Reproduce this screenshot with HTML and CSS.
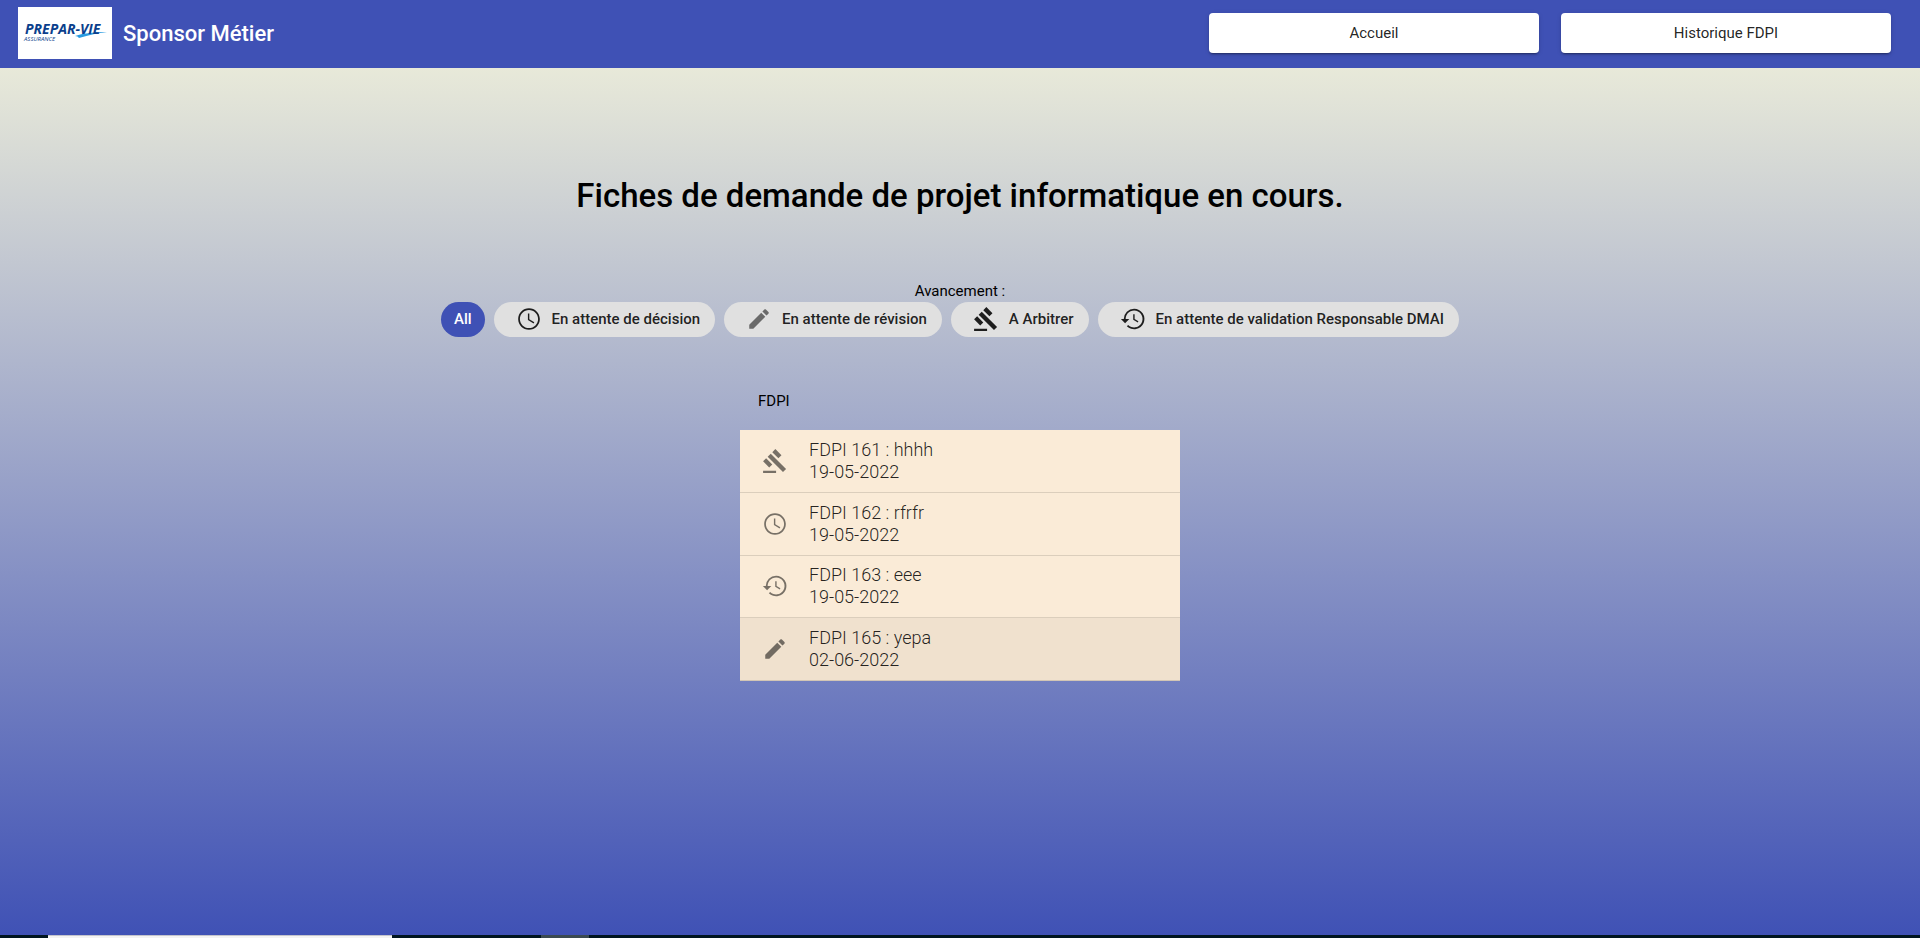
FILE: index.html
```html
<!DOCTYPE html>
<html lang="fr">
<head>
<meta charset="utf-8">
<meta name="viewport" content="width=device-width, initial-scale=1">
<title>Sponsor Métier</title>
<link rel="stylesheet" href="styles.css">
</head>
<body>
<svg class="sprite" aria-hidden="true">
  <symbol id="clock" viewBox="0 0 24 24"><path d="M11.99 2C6.47 2 2 6.48 2 12s4.47 10 9.99 10C17.52 22 22 17.52 22 12S17.52 2 11.99 2zM12 20.4c-4.64 0-8.4-3.76-8.4-8.4s3.76-8.4 8.4-8.4 8.4 3.76 8.4 8.4-3.76 8.4-8.4 8.4z"/><path d="M12.3 7H11v6l5.25 3.15.65-1.1-4.6-2.77z"/></symbol>
  <symbol id="edit" viewBox="0 0 24 24"><path d="M3 17.25V21h3.75L17.81 9.94l-3.75-3.75L3 17.25zM20.71 7.04c.39-.39.39-1.02 0-1.41l-2.34-2.34c-.39-.39-1.02-.39-1.41 0l-1.83 1.83 3.75 3.75 1.83-1.83z"/></symbol>
  <symbol id="gavel" viewBox="0 0 24 24"><path d="M1 21h12v2H1zM5.245 8.07l2.83-2.827 14.14 14.142-2.828 2.828zM12.317 1l5.657 5.656-2.83 2.83-5.654-5.66zM3.825 9.485l5.657 5.657-2.828 2.828-5.657-5.657z"/></symbol>
  <symbol id="history" viewBox="0 0 24 24"><path d="M13 2.5A9.5 9.5 0 0 0 3.5 12H.8l3.9 3.9L8.6 12H5.2A7.8 7.8 0 1 1 7.5 17.5L6.3 18.7A9.5 9.5 0 1 0 13 2.5z"/><path d="M12.2 7.5v5.2l4.2 2.5.6-1.1-3.5-2.1V7.5z"/></symbol>
</svg>
<header class="toolbar">
  <svg class="logo" viewBox="0 0 94 52" role="img" aria-label="Prepar-Vie Assurance">
    <path d="M0 0h94v52H0z" fill="#fff"/>
    <path d="M57 29C66 26 78 25 89 25C80 26 71 28 61 31Q60 29 57 29z" fill="#2a9be0"/>
    <text class="logo-name" x="7" y="27">PREPAR-VIE</text>
    <text class="logo-sub" x="6" y="34">ASSURANCE</text>
  </svg>
  <span class="brand">Sponsor Métier</span>
  <nav class="nav">
    <button class="nav-button" type="button">Accueil</button>
    <button class="nav-button" type="button">Historique FDPI</button>
  </nav>
</header>
<main class="content">
  <h1 class="title">Fiches de demande de projet informatique en cours.</h1>
  <section class="filters" aria-labelledby="filter-label">
    <div id="filter-label">Avancement :</div>
    <div class="chips">
      <button class="chip selected" type="button">All</button>
      <button class="chip" type="button"><svg class="icon"><use href="#clock"/></svg>En attente de décision</button>
      <button class="chip" type="button"><svg class="icon muted"><use href="#edit"/></svg>En attente de révision</button>
      <button class="chip" type="button"><svg class="icon"><use href="#gavel"/></svg>A Arbitrer</button>
      <button class="chip" type="button"><svg class="icon"><use href="#history"/></svg>En attente de validation Responsable DMAI</button>
    </div>
  </section>
  <section class="requests">
    <h2 class="subheader">FDPI</h2>
    <ul class="list">
      <li class="item"><svg class="icon muted"><use href="#gavel"/></svg><div>FDPI 161 : hhhh<br>19-05-2022</div></li>
      <li class="item"><svg class="icon muted"><use href="#clock"/></svg><div>FDPI 162 : rfrfr<br>19-05-2022</div></li>
      <li class="item"><svg class="icon muted"><use href="#history"/></svg><div>FDPI 163 : eee<br>19-05-2022</div></li>
      <li class="item active"><svg class="icon muted"><use href="#edit"/></svg><div>FDPI 165 : yepa<br>02-06-2022</div></li>
    </ul>
  </section>
</main>
<footer class="strip"><span class="strip-light"></span><span class="strip-grey"></span></footer>
</body>
</html>
```
FILE: styles.css
```css
* { box-sizing: border-box; }
body {
  margin: 0;
  min-height: 100vh;
  display: flex;
  flex-direction: column;
  font-family: Roboto, "Liberation Sans", sans-serif;
  font-size: 15px;
  color: #000;
  background: linear-gradient(beige, #3f51b5);
}
button { font-family: inherit; border: 0; cursor: pointer; }
.sprite { display: none; }
.icon { width: 26px; height: 26px; flex: none; fill: currentColor; }
.muted { opacity: 0.6; }
.toolbar {
  display: flex;
  align-items: center;
  height: 68px;
  padding: 0 29px 2px 18px;
  background: #3f51b5;
  color: #fff;
}
.logo { width: 94px; height: 52px; margin-right: 11px; }
.logo-name { font: italic bold 14px "Open Sans", sans-serif; fill: #0b3f8c; }
.logo-sub { font: italic 6px "Open Sans", sans-serif; fill: #0b3f8c; }
.brand { font-size: 22px; font-weight: 500; }
.nav { display: flex; gap: 22px; margin-left: auto; }
.nav-button {
  width: 330px;
  height: 40px;
  border-radius: 4px;
  background: #fff;
  color: rgba(0, 0, 0, 0.87);
  font-size: 15px;
  box-shadow: 0 3px 1px -2px rgba(0, 0, 0, 0.2), 0 2px 2px rgba(0, 0, 0, 0.14), 0 1px 5px rgba(0, 0, 0, 0.12);
}
.content { flex: 1; display: flex; flex-direction: column; align-items: center; }
.title { margin: 108px 0 65px; font-size: 33px; line-height: 40px; font-weight: 500; }
.filters { line-height: 20px; text-align: center; }
.chips { display: flex; gap: 9px; margin: 1px 20px 0 0; }
.chip {
  display: flex;
  align-items: center;
  gap: 10px;
  height: 35px;
  padding: 0 15px 1px 22px;
  border-radius: 18px;
  background: #e0e0e0;
  color: rgba(0, 0, 0, 0.87);
  font-size: 15px;
  font-weight: 500;
}
.chip.selected { padding: 0 13px 1px; background: #3f51b5; color: #fff; }
.requests { width: 440px; max-width: 100%; margin-top: 40px; }
.subheader { margin: 0; padding: 0 18px; font-size: 15px; font-weight: 400; line-height: 48px; height: 53px; }
.list {
  display: grid;
  grid-auto-rows: 1fr;
  min-height: 251px;
  margin: 0;
  padding: 0;
  list-style: none;
  background: #faebd7;
}
.item {
  display: flex;
  align-items: center;
  gap: 21px;
  padding: 8px 22px;
  border-bottom: 1px solid rgba(0, 0, 0, 0.12);
  color: rgba(0, 0, 0, 0.87);
  font-size: 18px;
  line-height: 22px;
  font-weight: 300;
}
.active { background: rgba(0, 0, 0, 0.04); }
.strip { display: flex; height: 3px; padding-left: 48px; background: #001520; }
.strip-light { width: 344px; background: #f3f3f3; border-top: 1px solid #c4c4cc; }
.strip-grey { width: 48px; margin-left: 149px; background: #3b4a52; }
```
